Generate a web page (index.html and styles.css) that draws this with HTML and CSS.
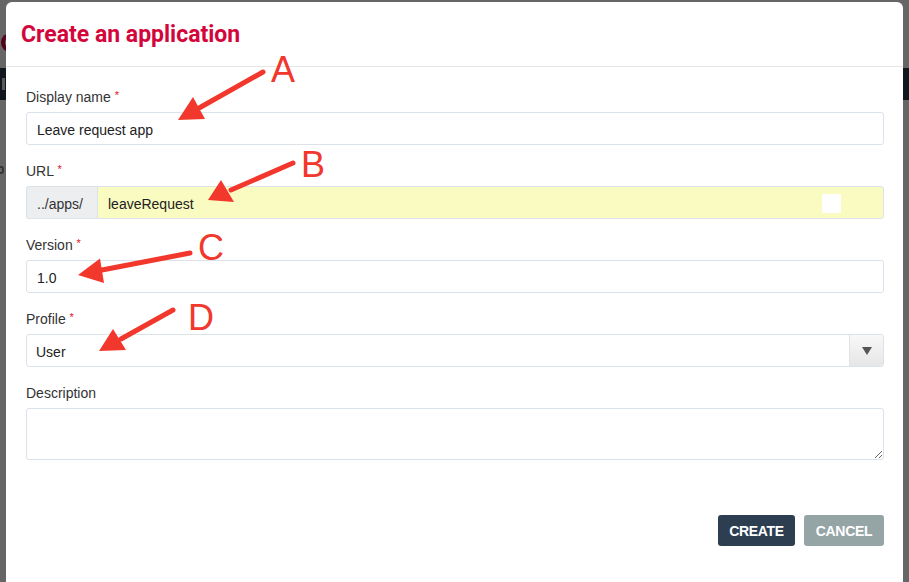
FILE: index.html
```html
<!DOCTYPE html>
<html>
<head>
<meta charset="utf-8">
<link rel="stylesheet" href="styles.css">
</head>
<body>
<div class="page">
  <div class="page-logo"><span class="logo-ring"></span></div>
  <div class="page-bar"><span class="bar-glyph"></span></div>
  <div class="page-line"><span class="line-glyph"></span></div>
</div>
<div class="dim"></div>
<div class="modal">
  <div class="modal-header">
    <h1 class="modal-title">Create an application</h1>
  </div>
  <div class="modal-body">
    <div class="field">
      <label class="label">Display name <span class="req">*</span></label>
      <div class="input">Leave request app</div>
    </div>
    <div class="field">
      <label class="label">URL <span class="req">*</span></label>
      <div class="input-group">
        <span class="addon">../apps/</span>
        <div class="input input-auto">leaveRequest<span class="autofill"></span></div>
      </div>
    </div>
    <div class="field">
      <label class="label">Version <span class="req">*</span></label>
      <div class="input">1.0</div>
    </div>
    <div class="field">
      <label class="label">Profile <span class="req">*</span></label>
      <div class="select">
        <span class="select-value">User</span>
        <span class="select-btn"><span class="caret"></span></span>
      </div>
    </div>
    <div class="field">
      <label class="label">Description</label>
      <textarea class="textarea"></textarea>
    </div>
  </div>
  <div class="modal-footer">
    <button class="btn btn-create">CREATE</button>
    <button class="btn btn-cancel">CANCEL</button>
  </div>
</div>
<svg class="annot" width="909" height="582" viewBox="0 0 909 582">
  <g stroke="#f2372c" stroke-width="5" stroke-linecap="round">
    <line x1="263" y1="72" x2="200" y2="107.5"/>
    <line x1="293" y1="163" x2="231" y2="190"/>
    <line x1="190" y1="253" x2="102" y2="270"/>
    <line x1="173" y1="310" x2="121" y2="339"/>
  </g>
  <g fill="#f2372c">
    <polygon points="178,120 193,97 205,119"/>
    <polygon points="208,200 221,180 234,202"/>
    <polygon points="78,275 100,258.5 104,283"/>
    <polygon points="99,351 113,329 126,350"/>
  </g>
  <g fill="#f2372c" font-family="Liberation Sans, Arial, sans-serif" font-size="36">
    <text x="271" y="82">A</text>
    <text x="301" y="177">B</text>
    <text x="198" y="260">C</text>
    <text x="188" y="330">D</text>
  </g>
</svg>
</body>
</html>
```
FILE: styles.css
```css
* { box-sizing: border-box; }
html, body { margin: 0; padding: 0; }
body {
  width: 909px;
  height: 582px;
  overflow: hidden;
  position: relative;
  background: #ffffff;
  font-family: "Liberation Sans", Arial, sans-serif;
  font-size: 14px;
  color: #333;
}
.page-logo {
  height: 68px;
  padding-top: 33px;
}
.logo-ring {
  display: block;
  width: 18px;
  height: 19px;
  margin-left: 1px;
  border: 4px solid #d3063b;
  border-right-color: transparent;
  border-radius: 50%;
}
.page-bar {
  background: #2b3a49;
  height: 32px;
  padding: 10px 0 0 0;
}
.bar-glyph {
  display: block;
  width: 3px;
  height: 12px;
  margin-left: 2px;
  background: #e0e0e0;
}
.page-line {
  padding-top: 66px;
}
.line-glyph {
  display: block;
  width: 7px;
  height: 8px;
  border: 2px solid #888;
  border-radius: 40%;
  margin-left: -3px;
}
.dim {
  position: absolute;
  inset: 0;
  background: rgba(0, 0, 0, 0.6);
}
.modal {
  position: absolute;
  left: 6px;
  top: 2px;
  width: 897px;
  height: 600px;
  background: #fff;
  border-radius: 6px;
}
.modal-header {
  height: 65px;
  border-bottom: 1px solid #e5e5e5;
  padding: 19px 15px 0 15px;
}
.modal-title {
  margin: 0;
  font-family: Roboto, "Liberation Sans", sans-serif;
  font-weight: 700;
  font-size: 23px;
  line-height: 28px;
  color: #d3063b;
}
.modal-body {
  padding: 20px 19px 0 20px;
}
.field {
  display: flex;
  flex-direction: column;
  margin-bottom: 16px;
}
.label {
  display: block;
  line-height: 20px;
  height: 20px;
  margin-bottom: 5px;
  color: #333;
}
.req {
  color: #e0101e;
  font-size: 11px;
  line-height: 0;
  vertical-align: 3px;
}
.input {
  height: 33px;
  border: 1px solid #dce2ea;
  border-radius: 3px;
  padding: 2px 10px 0 10px;
  color: #222;
  background: #fff;
  display: flex;
  align-items: center;
}
.input-group {
  display: flex;
  height: 33px;
}
.addon {
  width: 71px;
  flex: none;
  background: #eceeef;
  border: 1px solid #dce2ea;
  border-right: none;
  border-radius: 3px 0 0 3px;
  padding: 2px 0 0 10px;
  display: flex;
  align-items: center;
  color: #333;
}
.input-auto {
  flex: 1;
  background: #fafbc0;
  border-radius: 0 3px 3px 0;
}
.autofill {
  margin-left: auto;
  margin-right: 32px;
  width: 19px;
  height: 19px;
  background: #fff;
}
.select {
  height: 33px;
  border: 1px solid #dce2ea;
  border-radius: 3px;
  display: flex;
  align-items: stretch;
}
.select-value {
  flex: 1;
  padding: 2px 0 0 9px;
  display: flex;
  align-items: center;
  color: #222;
}
.select-btn {
  width: 34px;
  border-left: 1px solid #dfe2e6;
  background: linear-gradient(#f8f8f8, #e6e6e6);
  display: flex;
  align-items: center;
  justify-content: center;
  border-radius: 0 3px 3px 0;
}
.caret {
  width: 0;
  height: 0;
  border-left: 5px solid transparent;
  border-right: 5px solid transparent;
  border-top: 8px solid #555;
}
.textarea {
  height: 52px;
  border: 1px solid #dce2ea;
  border-radius: 3px;
  resize: vertical;
  font-family: inherit;
  font-size: 14px;
  padding: 6px 10px;
  background: #fff;
}
.modal-footer {
  display: flex;
  justify-content: flex-end;
  gap: 9px;
  padding: 39px 19px 0 0;
}
.btn {
  height: 31px;
  border: none;
  border-radius: 3px;
  color: #fff;
  font-family: "Liberation Sans", Arial, sans-serif;
  font-weight: 700;
  font-size: 14px;
  padding: 1px 0 0 0;
  letter-spacing: -0.3px;
}
.btn-create { background: #2c3e50; width: 77px; }
.btn-cancel { background: #95a5a6; width: 80px; }
.annot {
  position: absolute;
  left: 0;
  top: 0;
  pointer-events: none;
}
```
